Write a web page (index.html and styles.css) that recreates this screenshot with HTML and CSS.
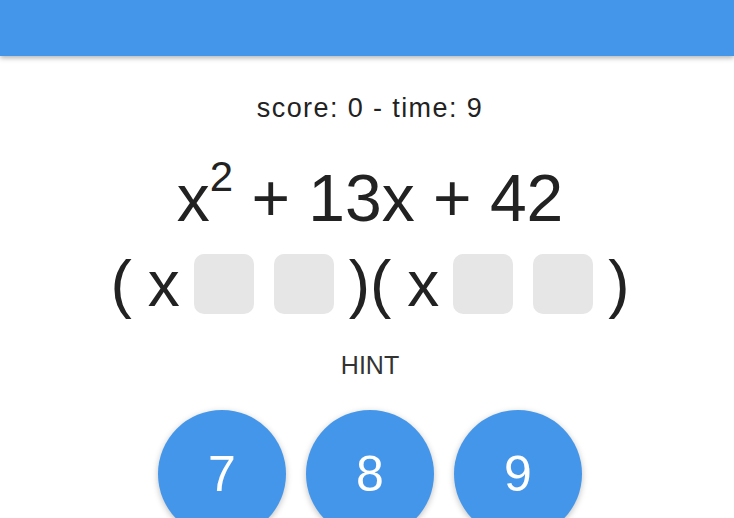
FILE: index.html
```html
<!DOCTYPE html>
<html>
<head>
<meta charset="utf-8">
<link rel="stylesheet" href="styles.css">
</head>
<body>
<header class="bar"></header>
<main class="game">
  <div class="score">score: 0 - time: 9</div>
  <div class="equation">x<sup>2</sup> + 13x + 42</div>
  <div class="factors">
    <span class="paren">(</span><span class="var">x</span>
    <span class="slot"></span><span class="slot"></span>
    <span class="paren close">)</span><span class="paren">(</span><span class="var">x</span>
    <span class="slot"></span><span class="slot"></span>
    <span class="paren close">)</span>
  </div>
  <div class="hint">HINT</div>
  <div class="keys">
    <button class="key">7</button>
    <button class="key">8</button>
    <button class="key">9</button>
  </div>
</main>
</body>
</html>
```
FILE: styles.css
```css
html, body {
  margin: 0;
  padding: 0;
  background: #fff;
  overflow: hidden;
}
body {
  font-family: "Liberation Sans", Arial, sans-serif;
  color: #222;
}
.bar {
  height: 56px;
  background: #4396ea;
  box-shadow: 0 2px 5px rgba(0,0,0,0.3);
}
.game {
  display: flex;
  flex-direction: column;
  align-items: center;
  padding-left: 6px;
}
.score {
  margin-top: 34px;
  font-size: 27px;
  letter-spacing: 1.4px;
  line-height: 36px;
}
.equation {
  margin-top: 36px;
  font-size: 66px;
  line-height: 72px;
}
.equation sup {
  font-size: 42px;
  line-height: 0;
  vertical-align: 0;
  position: relative;
  top: -30px;
}
.factors {
  display: flex;
  align-items: center;
  height: 60px;
  margin-top: 20px;
  font-size: 64px;
}
.paren { line-height: 1; }
.var { margin-left: 16px; margin-right: 14px; line-height: 1; }
.slot {
  width: 60px;
  height: 60px;
  background: #e6e6e6;
  border-radius: 10px;
  margin-right: 20px;
}
.close { margin-left: -5px; margin-right: 0; }
.hint {
  margin-top: 37px;
  font-size: 25px;
  color: #333;
}
.keys {
  display: flex;
  gap: 20px;
  margin-top: 30px;
}
.key {
  width: 128px;
  height: 128px;
  border-radius: 50%;
  border: none;
  background: #4396ea;
  color: #fff;
  font-family: "Liberation Sans", Arial, sans-serif;
  font-size: 50px;
  box-shadow: 0 2px 6px rgba(0,0,0,0.25);
  padding: 0;
}
```
